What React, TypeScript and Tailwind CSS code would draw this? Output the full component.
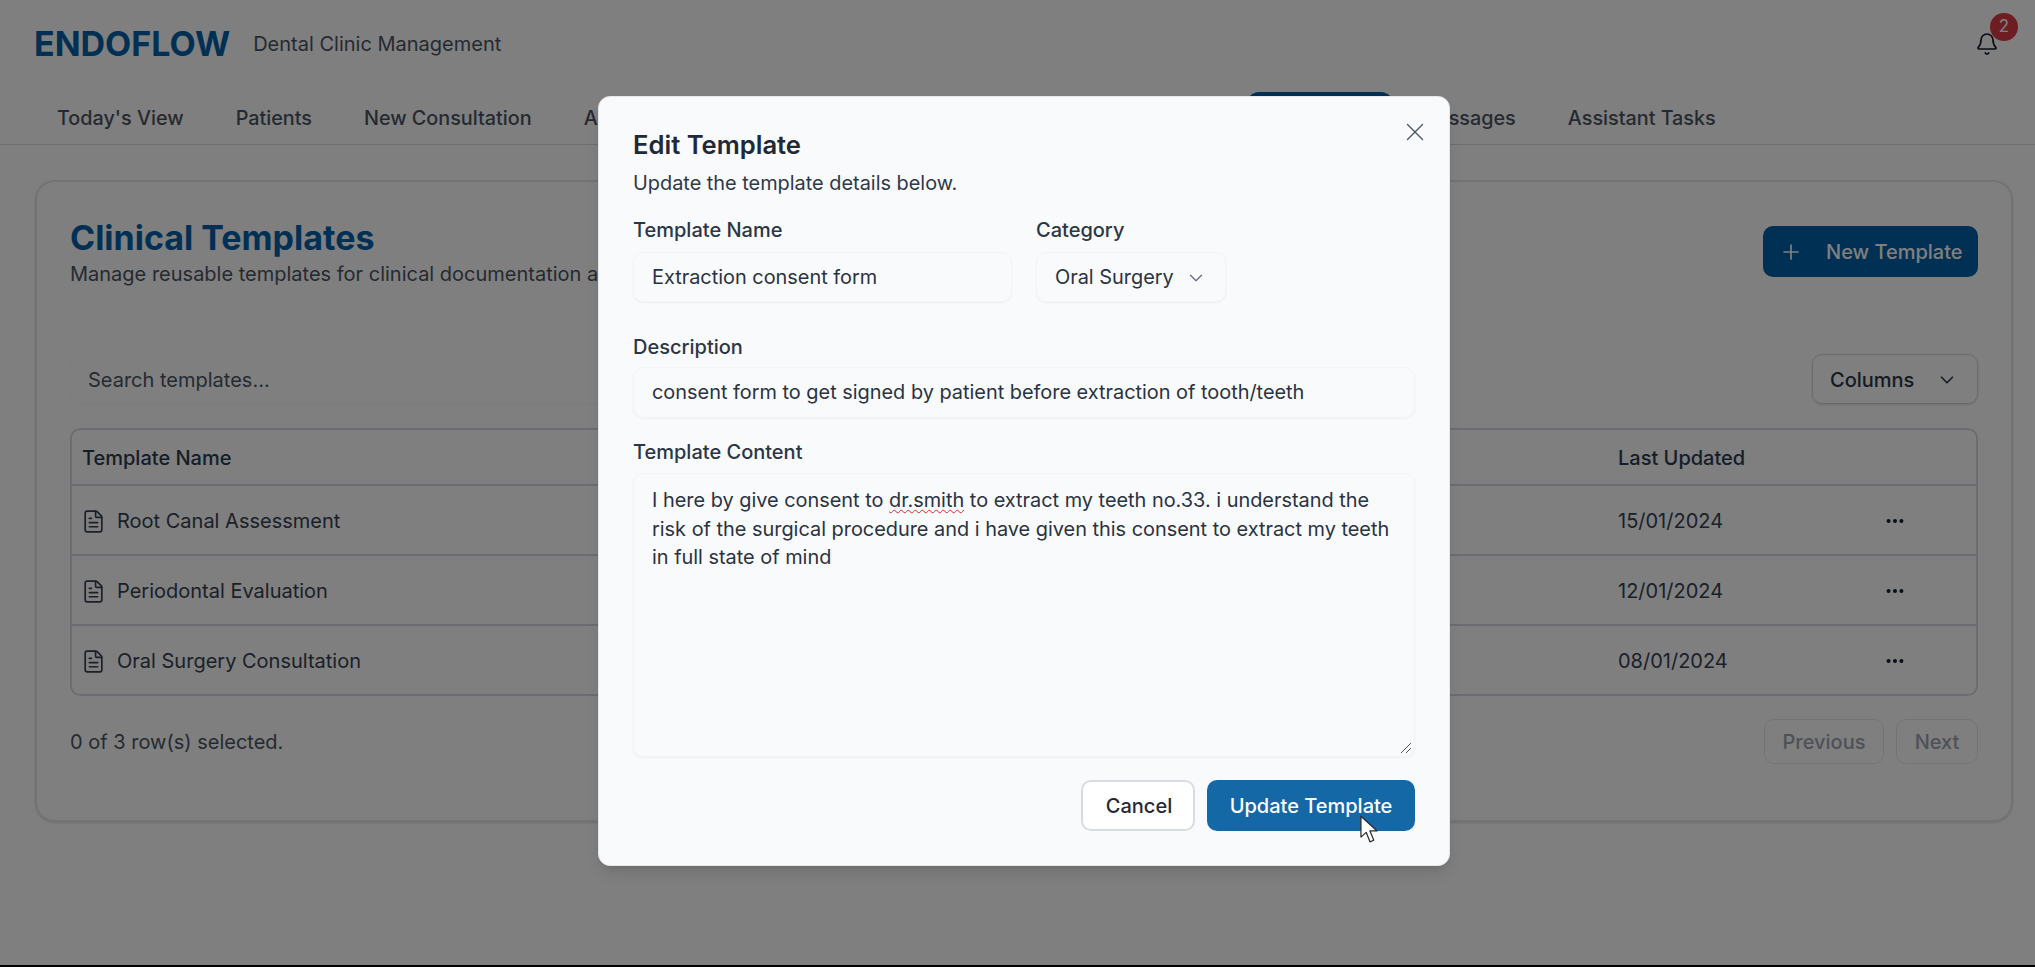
import { Bell, ChevronDown, FileText, MoreHorizontal, Plus, X } from "lucide-react";

const navItems = [
  { label: "Today's View", active: false },
  { label: "Patients", active: false },
  { label: "New Consultation", active: false },
  { label: "Appointments", active: false },
  { label: "Treatments", active: false, width: "w-[505px]" },
  { label: "Templates", active: true, width: "w-[146px]" },
  { label: "Messages", active: false },
  { label: "Assistant Tasks", active: false },
];

const templates = [
  { name: "Root Canal Assessment", updated: "15/01/2024" },
  { name: "Periodontal Evaluation", updated: "12/01/2024" },
  { name: "Oral Surgery Consultation", updated: "08/01/2024" },
];

function Page() {
  return (
    <div className="h-full bg-white text-[#374151]">
      <header className="flex h-[92px] items-start justify-between pl-[34px] pr-[15px]">
        <div className="flex items-center gap-[23px] pt-[24px]">
          <h1 className="text-[34px] leading-[40px] font-bold text-[#0060a8]">ENDOFLOW</h1>
          <p className="text-[20px] leading-[40px] text-[#4b5563]">Dental Clinic Management</p>
        </div>
        <div className="relative mt-[32px] mr-[21px]">
          <Bell size={24} strokeWidth={1.7} className="text-[#111827]" />
          <span className="absolute top-[-19px] left-[15px] flex h-[28px] w-[28px] items-center justify-center rounded-full bg-[#dc3d46] text-[17px] text-white">
            2
          </span>
        </div>
      </header>

      <nav className="flex h-[53px] border-b border-[#d6dbe1] pl-[31px]">
        {navItems.map((item) => (
          <div
            key={item.label}
            className={`flex h-[52px] items-center justify-center rounded-t-xl px-[26px] pt-[2px] text-[19.8px] font-medium shrink-0 ${item.width ?? ""} ${
              item.active ? "bg-[#0060a8] text-white" : "text-[#4b5563]"
            }`}
          >
            {item.label}
          </div>
        ))}
      </nav>

      <main className="pt-[35px] pl-[35px] pr-[22px]">
        <section className="rounded-[20px] border-2 border-[#e5e7eb] bg-white px-[33px] pt-[44px] pb-[56px] shadow-sm">
          <div className="flex items-start justify-between">
            <div className="-mt-[4px]">
              <h2 className="text-[34px] leading-[32px] font-bold text-[#0060a8]">Clinical Templates</h2>
              <p className="mt-[5px] text-[20px] leading-[30px] text-[#4b5563]">
                Manage reusable templates for clinical documentation and assessments
              </p>
            </div>
            <button className="flex h-[51px] w-[215px] items-center gap-[23px] rounded-[10px] bg-[#0060a8] pl-[16px] text-[20px] font-medium text-white">
              <Plus size={24} strokeWidth={1.7} />
              New Template
            </button>
          </div>

          <div className="mt-[65px] flex items-center justify-between">
            <div className="flex h-[50px] w-[800px] items-center rounded-[10px] border border-[#fafafa] px-[17px] pt-[2px] text-[20px] text-[#4b5563] shadow-[0_1px_1px_rgba(0,0,0,0.02)]">
              Search templates...
            </div>
            <button className="flex h-[50px] w-[166px] items-center justify-between rounded-[10px] border border-[#d1d5db] pl-[17px] pr-[19px] pt-[2px] text-[20px] font-medium text-[#2b3646] shadow-sm">
              Columns
              <ChevronDown size={22} strokeWidth={1.8} />
            </button>
          </div>

          <div className="mt-[24px] overflow-hidden rounded-[10px] border-2 border-[#d6dbe1]">
            <div className="grid h-[56px] grid-cols-[1fr_207px_164px] items-center border-b-2 border-[#d6dbe1] pt-[2px] text-[20px] font-medium text-[#2b3a52]">
              <div className="pl-[10px]">Template Name</div>
              <div className="pl-[13px]">Last Updated</div>
              <div />
            </div>
            {templates.map((t, i) => (
              <div
                key={t.name}
                className={`grid grid-cols-[1fr_207px_164px] items-center pt-[2px] text-[20px] text-[#374151] ${
                  i < templates.length - 1 ? "h-[70px] border-b-2 border-[#d6dbe1]" : "h-[68px]"
                }`}
              >
                <div className="flex items-center gap-[11px] pl-[9px]">
                  <FileText size={25} strokeWidth={1.6} className="text-[#374151]" />
                  {t.name}
                </div>
                <div className="pl-[13px]">{t.updated}</div>
                <div className="flex justify-center pl-[2px]">
                  <MoreHorizontal size={22} strokeWidth={2.4} className="text-[#111827]" />
                </div>
              </div>
            ))}
          </div>

          <div className="mt-[23px] flex items-center justify-between">
            <p className="text-[20px] text-[#4b5563]">0 of 3 row(s) selected.</p>
            <div className="flex gap-[12px] text-[20px] font-medium text-[#9ca3af]">
              <div className="flex h-[45px] w-[120px] items-center justify-center rounded-[10px] border border-[#e5e7eb]">Previous</div>
              <div className="flex h-[45px] w-[82px] items-center justify-center rounded-[10px] border border-[#e5e7eb]">Next</div>
            </div>
          </div>
        </section>
      </main>
    </div>
  );
}

function Field({ className, children }: { className: string; children: React.ReactNode }) {
  return (
    <div className={`flex items-center rounded-[10px] border border-[#f3f4f7] px-[18px] pt-[1px] text-[19.9px] text-[#2a3342] shadow-[0_1px_2px_rgba(0,0,0,0.05)] ${className}`}>
      {children}
    </div>
  );
}

function EditTemplateDialog() {
  return (
    <div className="absolute inset-0 bg-black/50">
      <div className="absolute top-[96px] left-[598px] h-[770px] w-[852px] rounded-xl border border-[#e5e7eb] bg-[#f9fafc] px-[34px] pt-[31px] shadow-lg">
        <button className="absolute top-[20px] right-[19px] text-[#4b5563]">
          <X size={30} strokeWidth={1.1} />
        </button>

        <h2 className="text-[25.6px] leading-[34px] font-semibold text-[#1f2937]">Edit Template</h2>
        <p className="mt-[6px] text-[19.9px] leading-[30px] text-[#2f3948]">Update the template details below.</p>

        <div className="mt-[18px] flex gap-[24px]">
          <div>
            <label className="block text-[20px] leading-[28px] font-medium text-[#2b3646]">Template Name</label>
            <Field className="mt-[8px] h-[50px] w-[379px]">Extraction consent form</Field>
          </div>
          <div>
            <label className="block text-[20px] leading-[28px] font-medium text-[#2b3646]">Category</label>
            <Field className="mt-[8px] h-[50px] w-[190px] justify-between">
              Oral Surgery
              <ChevronDown size={22} strokeWidth={1.5} className="text-[#6b7280]" />
            </Field>
          </div>
        </div>

        <label className="mt-[31px] block text-[20px] leading-[28px] font-medium text-[#2b3646]">Description</label>
        <Field className="mt-[6px] h-[51px]">consent form to get signed by patient before extraction of tooth/teeth</Field>

        <label className="mt-[20px] block text-[20px] leading-[28px] font-medium text-[#2b3646]">Template Content</label>
        <div className="relative mt-[7px] h-[284px] rounded-[10px] border border-[#f3f4f7] px-[18px] py-[12px] text-[19.9px] leading-[28.5px] text-[#2a3342] shadow-[0_1px_2px_rgba(0,0,0,0.05)]">
          I here by give consent to{" "}
          <span className="underline decoration-[#dc2626] decoration-wavy decoration-1 underline-offset-2">dr.smith</span> to extract my teeth no.33. i understand the
          risk of the surgical procedure and i have given this consent to extract my teeth in full state of mind
          <svg viewBox="0 0 12 12" className="absolute right-[2px] bottom-[2px] h-[12px] w-[12px] text-[#4b5563]" fill="none" stroke="currentColor" strokeWidth="1">
            <path d="M1 11 11 1M6 11l5-5" />
          </svg>
        </div>

        <div className="mt-[23px] flex justify-end gap-[12px]">
          <button className="h-[51px] w-[114px] rounded-[10px] border-2 border-[#d8dce2] bg-white pl-[2px] text-[20px] font-medium text-[#1f2937]">Cancel</button>
          <button className="h-[51px] w-[208px] rounded-[10px] bg-[#1568a6] text-[20px] font-medium text-white">Update Template</button>
        </div>
      </div>

      {/* mouse pointer over the submit button */}
      <svg viewBox="0 0 20 30" className="absolute top-[815px] left-[1360px] h-[29px] w-[19px]">
        <path d="M1 1v22l5.500-5 4 10 4-1.700-4-9.800H18z" fill="#ffffff" stroke="#2b2b2b" strokeWidth="1.300" strokeLinejoin="round" />
      </svg>
    </div>
  );
}

export default function App() {
  return (
    <div className="h-[967px] overflow-hidden bg-black font-['Inter',sans-serif]">
      <div className="relative h-[965px] overflow-hidden">
        <Page />
        <EditTemplateDialog />
      </div>
    </div>
  );
}
